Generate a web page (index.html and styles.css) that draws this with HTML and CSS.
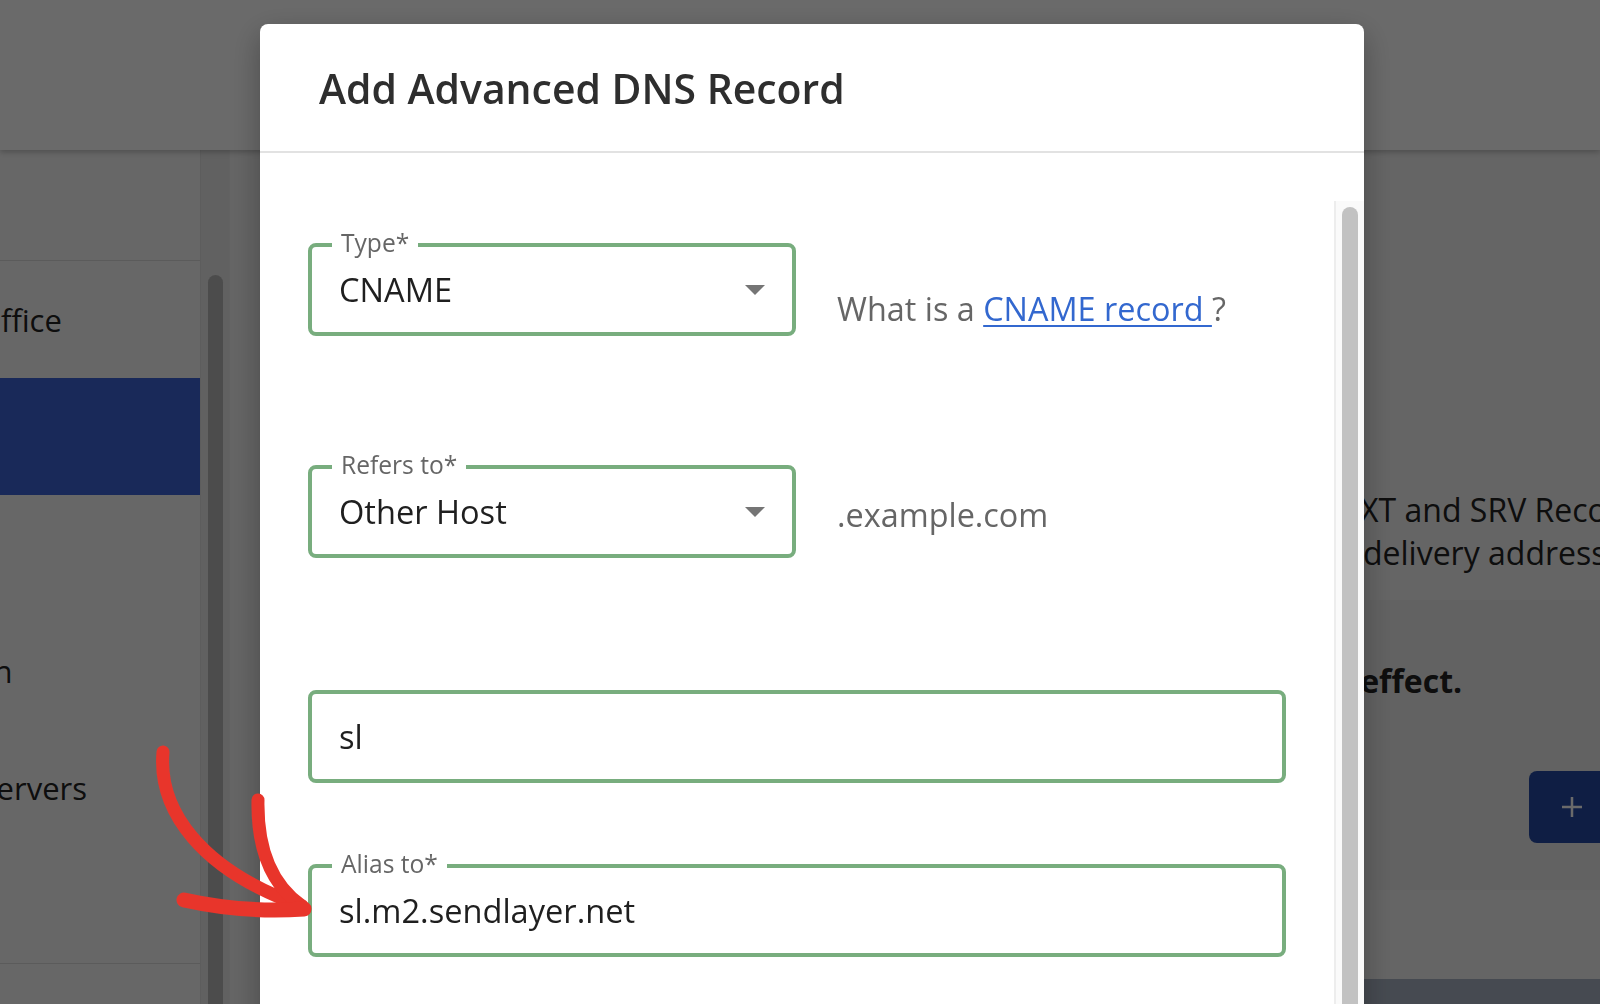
FILE: index.html
```html
<!DOCTYPE html>
<html lang="en">
  <head>
    <meta charset="UTF-8" />
    <meta name="viewport" content="width=device-width, initial-scale=1.0" />
    <title>Advanced DNS</title>
    <link rel="stylesheet" href="styles.css">
  </head>
  <body>
    <!-- Page behind the dialog -->
    <div class="app">
      <header class="topbar"></header>

      <div class="layout">
        <aside class="sidebar">
          <nav class="side-nav">
            <div class="side-head"></div>
            <a class="side-item" href="#">Microsoft Office</a>
            <a class="side-item active" href="#">DNS</a>
            <a class="side-item" href="#">Email</a>
            <a class="side-item" href="#">Subscription</a>
            <a class="side-item" href="#">Edit Nameservers</a>
            <a class="side-item" href="#">Transfer</a>
            <div class="side-foot"></div>
          </nav>
          <div class="side-scroll">
            <div class="side-thumb"></div>
          </div>
        </aside>

        <main class="main">
          <p class="intro">
            Use Advanced DNS to add or edit A, AAAA, CNAME, MX, TXT and SRV Records for this domain.<br>
            These entries define where your website points and fix a delivery address for your mail.
          </p>

          <div class="card">
            <p class="notice">Please note: changes can take up to 24 hours to take effect.</p>
            <div class="actions">
              <button class="add-btn">
                <svg width="22" height="22" viewBox="0 0 22 22">
                  <path d="M11 1v20M1 11h20" stroke="currentColor" stroke-width="2.5" />
                </svg>
                Add Record
              </button>
            </div>
          </div>

          <div class="table-head"></div>
        </main>
      </div>
    </div>

    <div class="backdrop"></div>

    <!-- Add record dialog -->
    <div class="modal">
      <div class="modal-header">
        <h2>Add Advanced DNS Record</h2>
      </div>

      <div class="modal-body">
        <form class="form">
          <div class="row">
            <div class="field select">
              <span class="field-label">Type*</span>
              <span class="value">CNAME</span>
              <svg class="caret" width="20" height="10" viewBox="0 0 20 10">
                <path d="M0 0h20L10 10z" fill="currentColor" />
              </svg>
            </div>
            <p class="note first">What is a <a href="#">CNAME record </a>?</p>
          </div>

          <div class="row">
            <div class="field select">
              <span class="field-label">Refers to*</span>
              <span class="value">Other Host</span>
              <svg class="caret" width="20" height="10" viewBox="0 0 20 10">
                <path d="M0 0h20L10 10z" fill="currentColor" />
              </svg>
            </div>
            <p class="note">.example.com</p>
          </div>

          <div class="row tight">
            <div class="field wide">
              <span class="value">sl</span>
            </div>
          </div>

          <div class="row">
            <div class="field wide">
              <span class="field-label">Alias to*</span>
              <span class="value">sl.m2.sendlayer.net</span>
            </div>
          </div>
        </form>

        <div class="rail">
          <div class="thumb"></div>
        </div>
      </div>
    </div>

    <!-- Hand-drawn arrow pointing at the Alias field -->
    <svg class="annotation" width="1600" height="1004" viewBox="0 0 1600 1004">
      <g fill="none" stroke="#e8352b" stroke-linecap="round">
        <path d="M163 752C158 810 200 870 302 906" stroke-width="13" />
        <path d="M258 800C257 850 272 885 302 906" stroke-width="13" />
        <path d="M184 900C220 908 260 912 304 909" stroke-width="15" />
      </g>
    </svg>
  </body>
</html>
```

FILE: styles.css
```css
/* Global Styles */
* {
  margin: 0;
  padding: 0;
  box-sizing: border-box;
}

body {
  font-family: "Open Sans", "Noto Sans", sans-serif;
  background: #f3f3f3;
  color: #222;
  overflow: hidden;
  height: 100vh;
}

/* Page Behind */
.app {
  height: 100vh;
  display: flex;
  flex-direction: column;
}

.topbar {
  height: 150px;
  flex-shrink: 0;
  background: #fff;
  box-shadow: 0 2px 6px rgba(0, 0, 0, 0.25);
  position: relative;
  z-index: 1;
}

.layout {
  flex: 1;
  display: flex;
}

.sidebar {
  width: 230px;
  flex-shrink: 0;
  display: flex;
  overflow: hidden;
}

.side-nav {
  width: 200px;
  background: #f8f8f8;
  display: flex;
  flex-direction: column;
  overflow: hidden;
}

.side-head {
  height: 111px;
  flex-shrink: 0;
  border-bottom: 1px solid #dcdcdc;
}

/* labels start off to the left, only their tails show */
.side-item {
  height: 117px;
  flex-shrink: 0;
  display: flex;
  align-items: center;
  margin-left: -168px;
  width: 368px;
  font-size: 31px;
  color: #222;
  text-decoration: none;
  white-space: nowrap;
}

.side-item.active {
  background: #3e64d6;
  color: #fff;
}

.side-foot {
  border-top: 1px solid #dcdcdc;
  flex: 1;
}

.side-scroll {
  width: 30px;
  background: #e9e9e9;
  border-left: 1px solid #e0e0e0;
  border-right: 1px solid #ececec;
  padding: 125px 6px 0 7px;
}

.side-thumb {
  height: 900px;
  background: #b8b8b8;
  border-radius: 8px;
}

.main {
  flex: 1;
  padding-left: 32px;
  white-space: nowrap;
  overflow: hidden;
}

.intro {
  margin-top: 338px;
  padding-left: 252px;
  font-size: 32px;
  line-height: 43px;
}

.card {
  margin-top: 26px;
  padding: 59px 0 47px 252px;
  background: #ececec;
}

.notice {
  font-size: 32px;
  line-height: 43px;
  font-weight: bold;
}

.actions {
  margin-top: 69px;
  padding-left: 1015px;
}

.add-btn {
  height: 72px;
  padding: 0 32px;
  display: inline-flex;
  align-items: center;
  gap: 28px;
  background: #244aa4;
  color: #fff;
  border: none;
  border-radius: 8px;
  font-family: inherit;
  font-size: 32px;
}

.table-head {
  margin-top: 89px;
  height: 60px;
  background: #a9b3c3;
}

/* Dialog */
.backdrop {
  position: fixed;
  inset: 0;
  z-index: 10;
  background: rgba(0, 0, 0, 0.585);
}

.modal {
  position: fixed;
  top: 24px;
  left: 260px;
  z-index: 11;
  width: 1104px;
  height: 1100px;
  background: #fff;
  border-radius: 8px 8px 0 0;
  box-shadow: 0 10px 30px rgba(0, 0, 0, 0.3);
  display: flex;
  flex-direction: column;
}

.modal-header {
  height: 129px;
  padding: 0 59px;
  display: flex;
  align-items: center;
  border-bottom: 2px solid #e2e2e2;
}

.modal-header h2 {
  font-size: 40.9px;
  font-weight: 600;
  color: #2e2e2e;
}

.modal-body {
  flex: 1;
  display: flex;
  padding: 48px 0 0 48px;
}

.form {
  flex: 1;
  padding: 42px 48px 0 0;
}

.row {
  display: flex;
  align-items: flex-start;
  margin-bottom: 129px;
}

.row:nth-child(2) {
  margin-bottom: 132px;
}

.row.tight {
  margin-bottom: 81px;
}

/* Outlined text field */
.field {
  position: relative;
  width: 488px;
  height: 93px;
  border: 4px solid #78ad7e;
  border-radius: 8px;
  display: flex;
  align-items: center;
  padding: 0 27px;
  font-size: 32.6px;
  color: #1f1f1f;
}

.field.wide {
  width: 100%;
}

.field-label {
  position: absolute;
  top: -16px;
  left: 20px;
  padding: 0 9px;
  background: #fff;
  font-size: 24.6px;
  line-height: 24px;
  color: #666;
}

.caret {
  margin-left: auto;
  color: #757575;
}

.note {
  margin-left: 41px;
  margin-top: 25px;
  font-size: 32.4px;
  line-height: 48px;
  color: #666;
  white-space: nowrap;
}

.note.first {
  margin-top: 41px;
}

.note a {
  color: #3368cf;
  text-decoration-thickness: 2px;
  text-underline-offset: 4px;
}

/* Scroll rail */
.rail {
  width: 30px;
  background: #fafafa;
  border-left: 2px solid #ededed;
  padding: 6px 6px 0 6px;
}

.thumb {
  height: 900px;
  background: #c2c2c2;
  border-radius: 8px;
}

/* Annotation */
.annotation {
  position: fixed;
  top: 0;
  left: 0;
  z-index: 12;
  pointer-events: none;
}
```
